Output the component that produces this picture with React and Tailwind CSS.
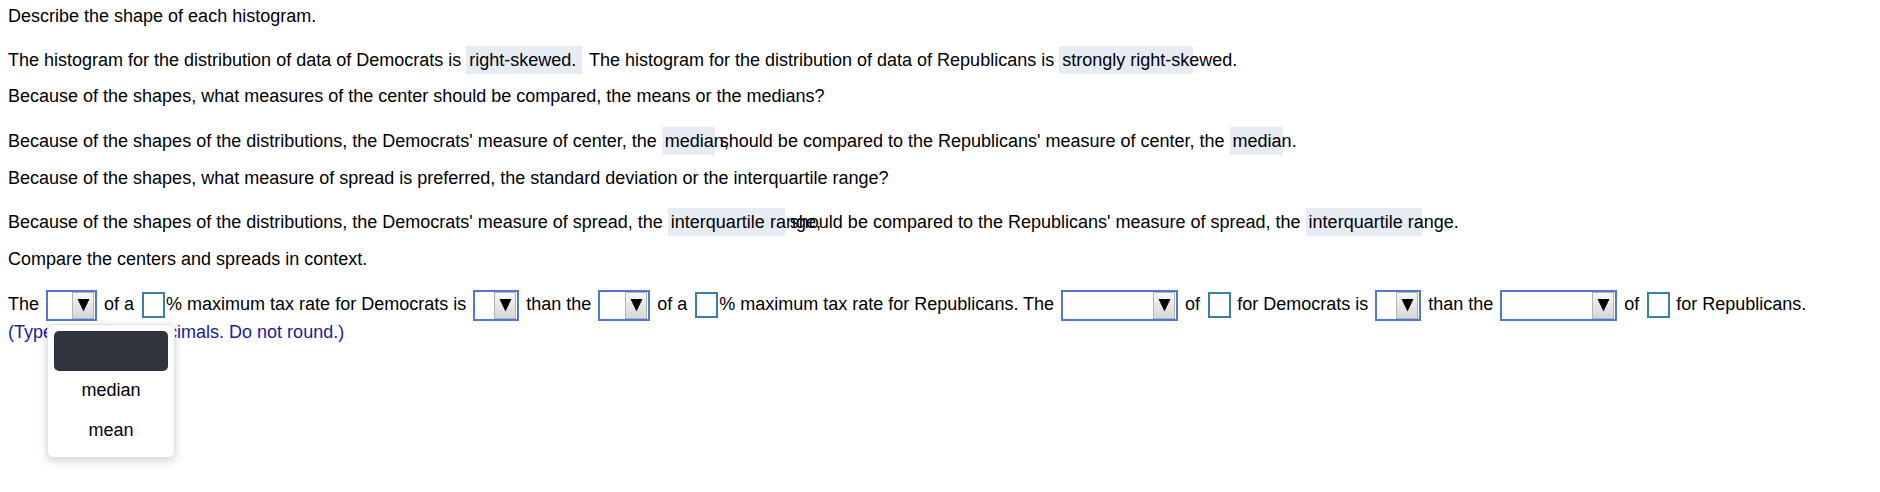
import React from "react";

function Hl({ w, children }) {
  return (
    <span
      className={`inline-block h-[28px] align-top bg-[#e7ebf4] pl-[3px] whitespace-nowrap leading-[28px] ${w}`}
    >
      {children}
    </span>
  );
}

function Drop({ w, children }) {
  return (
    <span
      className={`relative inline-flex h-[31px] mx-[2px] align-middle items-center justify-end border-2 border-[#5177d0] bg-white pr-[1px] ${w}`}
    >
      <span className="flex h-[27px] w-[22px] items-center justify-center border border-[#b4b4b4] bg-gradient-to-b from-[#f7f7f7] to-[#d6d6d6]">
        <svg width="13" height="14" viewBox="0 0 13 14">
          <polygon points="0.5,1 12.5,1 6.5,13.5" fill="#000" />
        </svg>
      </span>
      {children}
    </span>
  );
}

function Inp() {
  return (
    <span className="inline-block h-[26px] w-[23px] ml-[3px] mr-[1px] align-middle border-2 border-[#3b7fa5] bg-white" />
  );
}

export default function App() {
  return (
    <div className="min-h-[492px] bg-white pl-[8px] font-['Liberation_Sans',Arial,sans-serif] text-[18px] text-black">
      <div className="pt-[5px] leading-[22px]">Describe the shape of each histogram.</div>

      <div className="mt-[19px] leading-[28px] whitespace-nowrap">
        The histogram for the distribution of data of Democrats is{" "}
        <Hl w="w-[116px]">right-skewed.</Hl>
        <span className="ml-[2px]"> The histogram for the distribution of data of Republicans is </span>
        <Hl w="w-[134px]">strongly right-skewed.</Hl>
      </div>

      <div className="mt-[11px] leading-[22px]">
        Because of the shapes, what measures of the center should be compared, the means or the medians?
      </div>

      <div className="mt-[20px] leading-[28px] whitespace-nowrap">
        Because of the shapes of the distributions, the Democrats' measure of center, the{" "}
        <Hl w="w-[53px]">median,</Hl> should be compared to the Republicans' measure of center, the{" "}
        <Hl w="w-[53px]">median.</Hl>
      </div>

      <div className="mt-[12px] leading-[22px]">
        Because of the shapes, what measure of spread is preferred, the standard deviation or the interquartile range?
      </div>

      <div className="mt-[19px] leading-[28px] whitespace-nowrap">
        Because of the shapes of the distributions, the Democrats' measure of spread, the{" "}
        <Hl w="w-[117px]">interquartile range,</Hl> should be compared to the Republicans' measure of spread, the{" "}
        <Hl w="w-[116px]">interquartile range.</Hl>
      </div>

      <div className="mt-[12px] leading-[22px]">Compare the centers and spreads in context.</div>

      <div className="mt-[18px] leading-[32px] whitespace-nowrap">
        The{" "}
        <Drop w="w-[51px]">
          <div className="absolute left-[-1px] top-[32px] z-10 w-[128px] rounded-[6px] border border-[#e2e2e2] bg-white px-[6px] pt-[6px] pb-[6px] shadow-[0_3px_10px_rgba(0,0,0,0.18)] leading-normal">
            <div className="h-[40px] rounded-[5px] bg-[#30343f]" />
            <div className="flex h-[40px] items-center justify-center text-[18px] text-black">median</div>
            <div className="flex h-[40px] items-center justify-center text-[18px] text-black">mean</div>
          </div>
        </Drop>{" "}
        of a <Inp />% maximum tax rate for Democrats is <Drop w="w-[46px]" /> than the{" "}
        <Drop w="w-[52px]" /> of a <Inp />% maximum tax rate for Republicans. The{" "}
        <Drop w="w-[117px]" /> of <Inp /> for Democrats is <Drop w="w-[46px]" /> than the{" "}
        <Drop w="w-[117px]" /> of <Inp /> for Republicans.
      </div>

      <div className="leading-[22px] text-[#1b1b9c]">(Type integers or decimals. Do not round.)</div>
    </div>
  );
}
